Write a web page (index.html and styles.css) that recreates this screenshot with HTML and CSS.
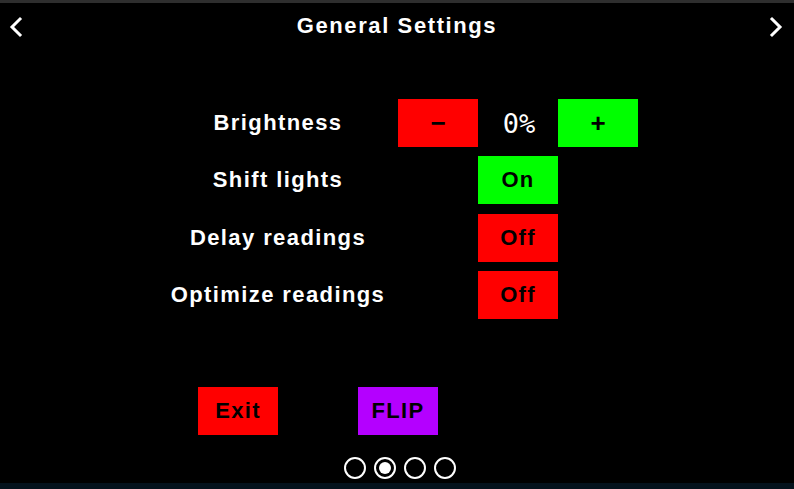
FILE: index.html
```html
<!DOCTYPE html>
<html>
<head>
<meta charset="utf-8">
<link rel="stylesheet" href="styles.css">
</head>
<body>
<div class="screen">
  <div class="topline"></div>
  <header class="header">
    <svg class="arrow" width="24" height="46" viewBox="0 0 24 46"><polyline points="19,16 11,24 19,32" fill="none" stroke="#fff" stroke-width="3" stroke-linecap="square"/></svg>
    <h1 class="title">General Settings</h1>
    <svg class="arrow" width="24" height="46" viewBox="0 0 24 46"><polyline points="5,16 13,24 5,32" fill="none" stroke="#fff" stroke-width="3" stroke-linecap="square"/></svg>
  </header>
  <main class="settings">
    <div class="label">Brightness</div>
    <div class="btn red sign">−</div>
    <div class="value">0%</div>
    <div class="btn green sign">+</div>

    <div class="label">Shift lights</div>
    <div class="spacer"></div>
    <div class="btn green">On</div>
    <div class="spacer"></div>

    <div class="label">Delay readings</div>
    <div class="spacer"></div>
    <div class="btn red">Off</div>
    <div class="spacer"></div>

    <div class="label">Optimize readings</div>
    <div class="spacer"></div>
    <div class="btn red">Off</div>
    <div class="spacer"></div>
  </main>
  <div class="actions">
    <div class="btn red">Exit</div>
    <div class="btn purple">FLIP</div>
  </div>
  <div class="dots">
    <span class="dot"></span>
    <span class="dot active"></span>
    <span class="dot"></span>
    <span class="dot"></span>
  </div>
  <div class="bottomline"></div>
</div>
</body>
</html>
```
FILE: styles.css
```css
html, body {
  margin: 0;
  padding: 0;
  background: #000;
}
.screen {
  width: 794px;
  height: 489px;
  overflow: hidden;
  background: #000;
  display: flex;
  flex-direction: column;
  font-family: "Liberation Sans", Arial, sans-serif;
  font-weight: bold;
}
.topline {
  height: 3px;
  background: #2e2e2e;
  flex: none;
}
.header {
  height: 46px;
  flex: none;
  display: flex;
  align-items: center;
  justify-content: space-between;
  padding: 0 3px 0 1px;
}
.arrow {
  display: block;
}
.title {
  margin: 0;
  color: #fff;
  font-size: 22px;
  font-weight: bold;
  letter-spacing: 1.6px;
  line-height: 48px;
  padding-left: 2px;
}
.settings {
  margin-top: 50px;
  margin-left: 158px;
  display: grid;
  grid-template-columns: 240px 80px 80px 80px;
  grid-auto-rows: 48px;
  row-gap: 9.34px;
  flex: none;
}
.label {
  color: #fff;
  font-size: 22px;
  letter-spacing: 1.4px;
  display: flex;
  align-items: center;
  justify-content: center;
}
.btn {
  width: 80px;
  height: 48px;
  display: flex;
  align-items: center;
  justify-content: center;
  color: #000;
  font-size: 22px;
  letter-spacing: 1.3px;
}
.btn.sign {
  font-size: 26px;
  letter-spacing: 0;
}
.red { background: #ff0000; }
.green { background: #00ff00; }
.purple { background: #b400ff; }
.value {
  color: #fff;
  font-family: "DejaVu Sans Mono", monospace;
  font-weight: normal;
  font-size: 27px;
  display: flex;
  align-items: center;
  justify-content: center;
  padding-left: 2px;
}
.actions {
  margin-top: 68px;
  margin-left: 198px;
  display: flex;
  gap: 80px;
  flex: none;
}
.dots {
  margin-top: 22px;
  margin-left: 344px;
  display: flex;
  gap: 8px;
  flex: none;
}
.dot {
  width: 18px;
  height: 18px;
  border: 2px solid #fff;
  border-radius: 50%;
  box-sizing: content-box;
  position: relative;
}
.dot.active::after {
  content: "";
  position: absolute;
  left: 3px;
  top: 3px;
  width: 12px;
  height: 12px;
  border-radius: 50%;
  background: #fff;
}
.bottomline {
  margin-top: 4px;
  height: 6px;
  background: #04121c;
  flex: none;
}
```
